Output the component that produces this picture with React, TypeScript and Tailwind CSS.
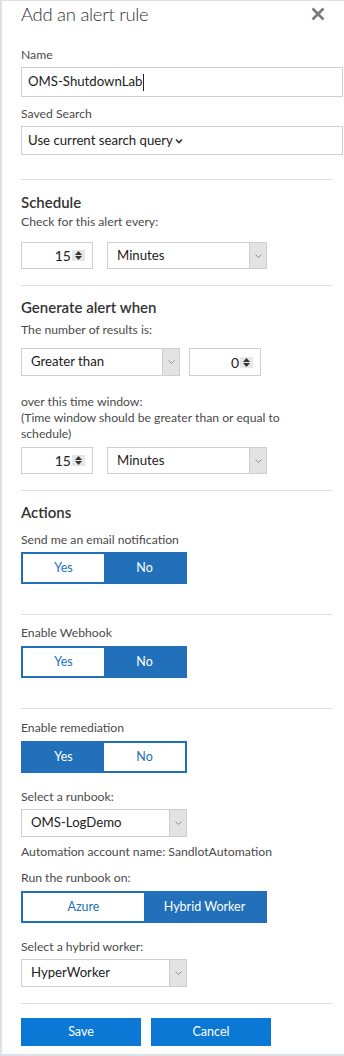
import React from "react";

const font = { fontFamily: 'Lato, "Open Sans", sans-serif' };

function Spinner() {
  return (
    <span className="ml-[1px] flex h-[11px] w-[13px] flex-col items-center justify-center gap-[1px] bg-[#e6e6e6]">
      <svg width="7" height="4" viewBox="0 0 7 4">
        <path d="M0 4 L3.5 0 L7 4 Z" fill="#333" />
      </svg>
      <svg width="7" height="4" viewBox="0 0 7 4">
        <path d="M0 0 L3.5 4 L7 0 Z" fill="#333" />
      </svg>
    </span>
  );
}

function NumberBox({ value, className }: { value: string; className?: string }) {
  return (
    <div
      className={`flex w-[72px] items-center justify-end border border-[#cfcfcf] bg-white pr-[7px] text-[14px] text-[#222] ${className ?? ""}`}
    >
      <span>{value}</span>
      <Spinner />
    </div>
  );
}

function Select({ value, className }: { value: string; className?: string }) {
  return (
    <div className={`flex border border-[#cfcfcf] bg-white ${className ?? ""}`}>
      <span className="flex flex-1 items-center pl-[9px] text-[13.2px] text-[#222]">{value}</span>
      <span className="flex w-[17px] items-center justify-center border-l border-[#cfcfcf] bg-[#e3e3e3]">
        <svg width="7" height="4" viewBox="0 0 7 4">
          <path d="M0.5 0.5 L3.5 3.5 L6.5 0.5" stroke="#8a8a8a" strokeWidth="1" fill="none" />
        </svg>
      </span>
    </div>
  );
}

function Toggle({
  left,
  right,
  active,
  className,
}: {
  left: string;
  right: string;
  active: "left" | "right";
  className?: string;
}) {
  return (
    <div className={`flex h-[32px] border-2 border-[#2170b9] text-[12.5px] ${className ?? ""}`}>
      <span
        className={`flex flex-1 items-center justify-center ${
          active === "left" ? "bg-[#2170b9] text-white" : "bg-white text-[#2170b9]"
        }`}
      >
        {left}
      </span>
      <span
        className={`flex flex-1 items-center justify-center ${
          active === "right" ? "bg-[#2170b9] text-white" : "bg-white text-[#2170b9]"
        }`}
      >
        {right}
      </span>
    </div>
  );
}

function Label({ children, className }: { children: React.ReactNode; className?: string }) {
  return <div className={`text-[12.2px] leading-[18px] text-[#4a4a4a] ${className ?? ""}`}>{children}</div>;
}

function Heading({ children, className }: { children: React.ReactNode; className?: string }) {
  return (
    <div className={`text-[15px] font-semibold leading-[20px] text-[#333] ${className ?? ""}`}>{children}</div>
  );
}

function Divider({ className }: { className?: string }) {
  return <div className={`mr-[10px] h-px bg-[#e0e0e0] ${className ?? ""}`} />;
}

export default function App() {
  return (
    <div
      style={font}
      className="flex h-[1056px] w-[344px] flex-col border-b-2 border-l-2 border-t border-[#dde1e8] bg-white pl-[19px] pr-[1px]"
    >
      {/* header */}
      <div className="flex h-[26px] items-center justify-between">
        <h1 className="text-[18.5px] font-light leading-[26px] tracking-[-0.3px] text-[#333]">Add an alert rule</h1>
        <svg width="14" height="14" viewBox="0 0 14 14" className="mr-[18px]">
          <path d="M1.5 1.5 L12.5 12.5 M12.5 1.5 L1.5 12.5" stroke="#7a7a7a" strokeWidth="2.6" />
        </svg>
      </div>

      <Label className="mt-[19px]">Name</Label>
      <div className="mt-[3px] flex h-[30px] items-center border border-[#cfcfcf] pl-[6px] text-[13.2px] text-[#222]">
        OMS-ShutdownLab
        <span className="ml-[1px] h-[17px] w-px bg-[#222]" />
      </div>

      <Label className="mt-[8px]">Saved Search</Label>
      <div className="mt-[3px] flex h-[29px] items-center border border-[#cfcfcf] pl-[6px] text-[13.2px] text-[#222]">
        Use current search query
        <svg width="8" height="6" viewBox="0 0 8 6" className="ml-[2px] mt-[1px]">
          <path d="M1 1.5 L4 4.5 L7 1.5" stroke="#333" strokeWidth="1.6" fill="none" />
        </svg>
      </div>

      <Divider className="mt-[24px]" />
      <Heading className="mt-[12px]">Schedule</Heading>
      <Label className="mt-[1px]">Check for this alert every:</Label>
      <div className="mt-[11px] flex h-[27px] gap-[14px]">
        <NumberBox value="15" />
        <Select value="Minutes" className="w-[160px]" />
      </div>

      <Divider className="mt-[16px]" />
      <Heading className="mt-[11px]">Generate alert when</Heading>
      <Label className="mt-[4px]">The number of results is:</Label>
      <div className="mt-[9px] flex h-[28px] gap-[9px]">
        <Select value="Greater than" className="w-[159px]" />
        <NumberBox value="0" />
      </div>

      <div className="mt-[18px] text-[12.2px] leading-[16px] text-[#4a4a4a]">
        over this time window:
        <br />
        (Time window should be greater than or equal to
        <br />
        schedule)
      </div>
      <div className="mt-[5px] flex h-[27px] gap-[14px]">
        <NumberBox value="15" />
        <Select value="Minutes" className="w-[160px]" />
      </div>

      <Divider className="mt-[16px]" />
      <Heading className="mt-[11px]">Actions</Heading>
      <Label className="mt-[9px]">Send me an email notification</Label>
      <Toggle left="Yes" right="No" active="right" className="mt-[3px] w-[166px]" />

      <Divider className="mt-[30px]" />
      <Label className="mt-[9px]">Enable Webhook</Label>
      <Toggle left="Yes" right="No" active="right" className="mt-[4px] w-[166px]" />

      <Divider className="mt-[30px]" />
      <Label className="mt-[10px]">Enable remediation</Label>
      <Toggle left="Yes" right="No" active="left" className="mt-[4px] w-[166px]" />

      <Label className="mt-[15px]">Select a runbook:</Label>
      <Select value="OMS-LogDemo" className="mt-[3px] h-[28px] w-[166px]" />
      <Label className="mt-[6px]">Automation account name: SandlotAutomation</Label>

      <Label className="mt-[8px]">Run the runbook on:</Label>
      <Toggle left="Azure" right="Hybrid Worker" active="right" className="mt-[4px] w-[246px]" />

      <Label className="mt-[15px]">Select a hybrid worker:</Label>
      <Select value="HyperWorker" className="mt-[3px] h-[28px] w-[166px]" />

      <Divider className="mt-[16px]" />
      <div className="mt-[14px] flex gap-[10px]">
        <button className="h-[28px] w-[120px] bg-[#0a78d4] text-[12.5px] text-white">Save</button>
        <button className="h-[28px] w-[120px] bg-[#0a78d4] text-[12.5px] text-white">Cancel</button>
      </div>
    </div>
  );
}
